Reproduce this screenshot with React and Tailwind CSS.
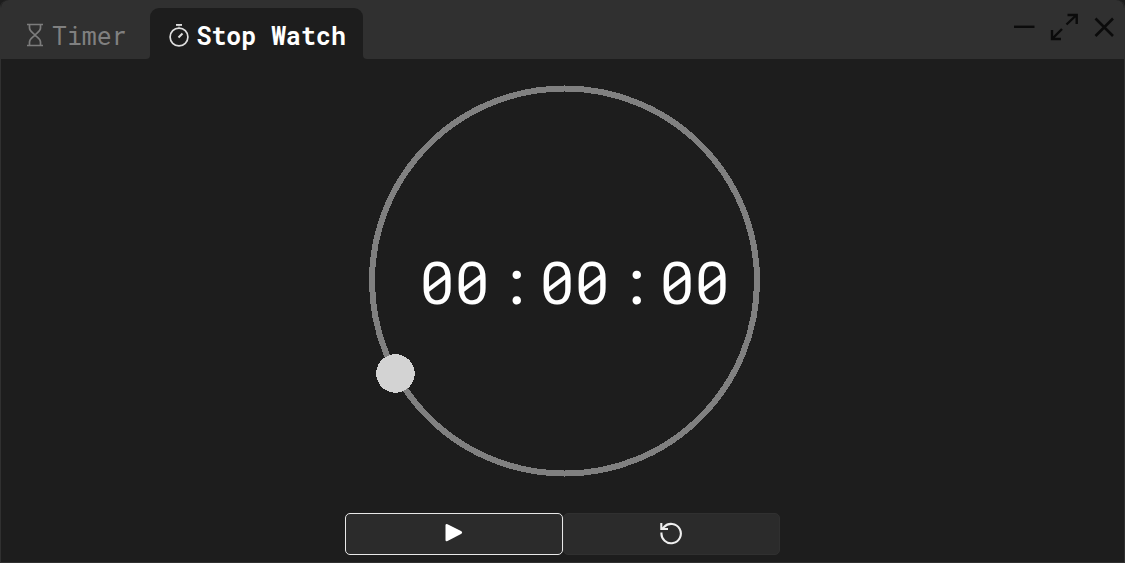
function Hourglass() {
  return (
    <svg className="relative left-[0.500px] h-6 w-[18px] shrink-0" viewBox="0 0 18 24" fill="none" stroke="#7c7c7c" strokeWidth="1.7">
      <path d="M1 1.500H17M1 22.500H17M3.500 1.500V5C3.500 8.500 7.500 10 9 12C10.500 14 14.500 15.500 14.500 19V22.500M14.500 1.500V5C14.500 8.500 10.500 10 9 12C7.500 14 3.500 15.500 3.500 19V22.500" />
    </svg>
  );
}

function StopwatchIcon() {
  return (
    <svg className="relative top-px h-6 w-5 shrink-0" viewBox="0 0 20 24" fill="none" stroke="#dedede" strokeWidth="1.700">
      <circle cx="10" cy="13" r="8.900" />
      <path d="M7 0.900H13" strokeWidth="1.900" />
      <path d="M10 1V4" strokeWidth="1" opacity="0.400" />
      <path d="M9.500 13.500L13.500 9.500" strokeWidth="2" />
    </svg>
  );
}

function Pair() {
  return <span className="w-[70px]">00</span>;
}

function Colon() {
  return <span className="flex w-[50px] justify-center">:</span>;
}

export default function App() {
  return (
    <div className="h-[563px] w-[1125px] overflow-hidden bg-[#1d1d1d]">
      <div className="flex h-full flex-col rounded-t-lg border-x border-b border-[#303030] bg-[#1d1d1d] font-['Roboto_Mono','DejaVu_Sans_Mono',monospace]">
        <header className="flex h-[59px] shrink-0 items-start justify-between rounded-t-lg bg-[#1d1d1d]">
          <div className="flex">
            <div className="flex h-[59px] w-[149px] items-center rounded-tl-lg rounded-br-[4px] bg-[#303030] pl-6 pt-[11px]">
              <Hourglass />
              <span className="ml-[9px] pt-[2px] text-[24.900px] leading-8 text-[#808080]">Timer</span>
            </div>
            <div className="h-[59px] w-[213px] bg-linear-to-b from-[#303030] from-50% to-[#1d1d1d] to-50% pt-2">
              <div className="flex h-[51px] items-center rounded-t-[9px] bg-[#1d1d1d] pl-[19px] pt-[3px]">
                <StopwatchIcon />
                <span className="ml-[7.500px] whitespace-pre pt-[2px] text-[24.900px] font-bold leading-8 text-white">Stop Watch</span>
              </div>
            </div>
          </div>
          <div className="flex h-[59px] flex-1 justify-end rounded-bl-[4px] rounded-tr-lg bg-[#303030]">
            <svg className="h-[58px] w-[124px]" viewBox="1000 0 124 58" fill="none" stroke="#0b0b0b" strokeWidth="2.400">
              <path d="M1014 26.800H1034.500" />
              <path d="M1066.500 24.500L1076.500 15M1067.500 15H1076.700V24M1062 29L1052 39M1052 30V39H1061" />
              <path d="M1095.500 18.500L1113 36M1113 18.500L1095.500 36" strokeWidth="2.600" />
            </svg>
          </div>
        </header>
        <main className="flex flex-1 flex-col items-center">
          <div className="relative left-px mt-[26px] flex h-[392px] w-[392px] items-center justify-center">
            <svg className="absolute inset-0 h-full w-full" viewBox="0 0 392 392" shapeRendering="crispEdges">
              <circle cx="196.500" cy="196" r="192.500" fill="none" stroke="#808080" strokeWidth="6" />
              <circle cx="27.500" cy="288.500" r="19.300" fill="#d3d3d3" />
            </svg>
            <div className="relative left-[11px] top-px flex h-[44px] items-center text-[58.500px] font-[450] leading-[44px] text-white">
              <Pair />
              <Colon />
              <Pair />
              <Colon />
              <Pair />
            </div>
          </div>
          <div className="mt-9 flex h-[42px] w-[435px]">
            <button className="flex flex-1 items-center justify-center rounded-[5px] border border-[#e8e8e8] bg-[#2b2b2b]">
              <svg className="relative -top-px h-5 w-5" viewBox="0 0 20 20" fill="white">
                <path d="M1.500 2.500Q1.500 0.500 3.500 1.200L17 8Q19.300 9.500 17 11L3.500 18Q1.500 18.700 1.500 17Z" />
              </svg>
            </button>
            <button className="flex flex-1 items-center justify-center rounded-[5px] border border-[#303030] bg-[#2b2b2b]">
              <svg className="relative -top-px h-6 w-6" viewBox="0 0 24 24" fill="none" stroke="#eeeeee" strokeWidth="2.100">
                <path d="M2.500 11.500A9.700 9.700 0 1 0 5 6L3 8" />
                <path d="M2.300 2V8H9" />
              </svg>
            </button>
          </div>
        </main>
      </div>
    </div>
  );
}
